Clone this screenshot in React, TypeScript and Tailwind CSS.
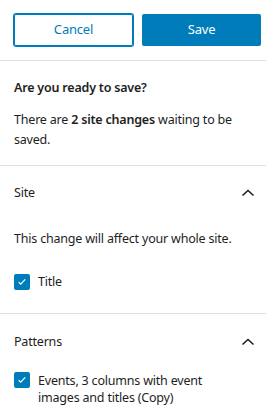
import React from 'react';

const Check = () => (
  <span className="flex items-center justify-center w-4 h-4 rounded-[2px] bg-[#007cba] shrink-0">
    <svg viewBox="0 0 16 16" className="w-3 h-3" fill="none">
      <path d="M3.5 8.2l2.8 2.6 6-6.2" stroke="white" strokeWidth="1.6" />
    </svg>
  </span>
);

const Chevron = () => (
  <svg viewBox="0 0 24 24" className="w-6 h-6" fill="none">
    <path d="M6.5 14.5l5.5-5 5.5 5" stroke="#1e1e1e" strokeWidth="1.6" />
  </svg>
);

export default function App() {
  return (
    <div className="w-[266px] h-[418px] bg-white text-[12.5px] tracking-[-0.2px] text-[#1e1e1e] overflow-hidden" style={{ fontFamily: '"Noto Sans", sans-serif' }}>
      {/* Actions */}
      <div className="flex items-center gap-[9px] pl-[14px] pr-[5px] h-[61px] border-b border-[#e0e0e0]">
        <button className="w-[119px] h-8 rounded-[2px] border border-[#007cba] ring-1 ring-[#007cba] text-[#007cba] text-[13px]">Cancel</button>
        <button className="w-[119px] h-8 rounded-[2px] bg-[#007cba] text-white text-[13px]">Save</button>
      </div>

      {/* Intro */}
      <div className="px-[14px] pt-[17px] pb-[15px] border-b border-[#e0e0e0]">
        <p className="font-semibold leading-5">Are you ready to save?</p>
        <p className="mt-3 leading-5">
          There are <strong className="font-semibold">2 site changes</strong> waiting to be saved.
        </p>
      </div>

      {/* Site */}
      <div className="border-b border-[#e0e0e0]">
        <div className="flex items-center justify-between pl-[14px] pr-[6px] h-[54px]">
          <span>Site</span>
          <Chevron />
        </div>
        <div className="px-[14px] pb-[21px]">
          <p className="leading-5 mt-[9px]">This change will affect your whole site.</p>
          <label className="flex items-center gap-2 mt-[24px]">
            <Check />
            <span>Title</span>
          </label>
        </div>
      </div>

      {/* Patterns */}
      <div>
        <div className="flex items-center justify-between pl-[14px] pr-[6px] h-[57px]">
          <span>Patterns</span>
          <Chevron />
        </div>
        <div className="px-[14px]">
          <label className="flex items-start gap-2 mt-[1px]">
            <Check />
            <span className="leading-[17px] w-[180px]">Events, 3 columns with event images and titles (Copy)</span>
          </label>
        </div>
      </div>
    </div>
  );
}
